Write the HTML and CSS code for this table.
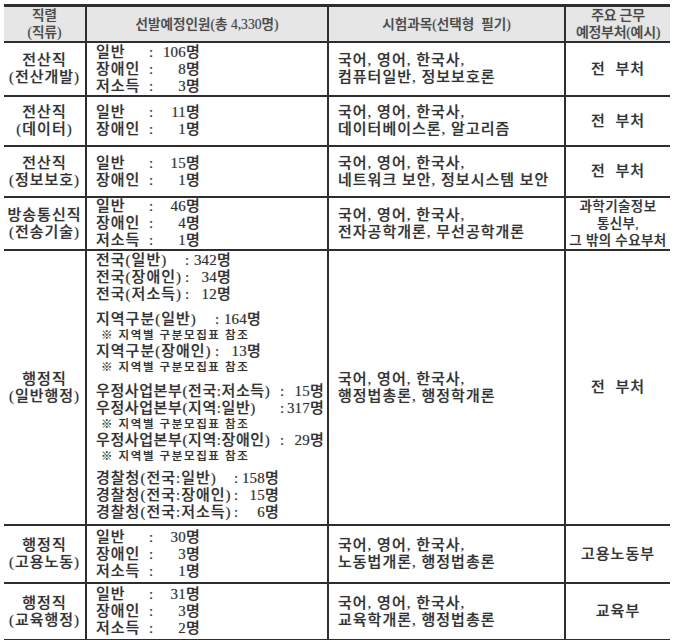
FILE: index.html
```html
<!DOCTYPE html>
<html lang="ko">
<head>
<meta charset="utf-8">
<title>선발예정인원</title>
<link rel="stylesheet" href="styles.css">
</head>
<body>
<table class="recruit">
  <colgroup>
    <col class="c1"><col class="c2"><col class="c3"><col class="c4">
  </colgroup>
  <thead>
    <tr class="head">
      <th>직렬<br>(직류)</th>
      <th>선발예정인원(총 4,330명)</th>
      <th>시험과목(선택형&nbsp; 필기)</th>
      <th class="dept-head">주요 근무<br>예정부처(예시)</th>
    </tr>
  </thead>
  <tbody>
    <tr class="r1">
      <td class="job">전산직<br>(전산개발)</td>
      <td class="quota">
        <div class="grp g-a">
          <span>일반</span><span>:</span><span class="n">106명</span>
          <span>장애인</span><span>:</span><span class="n">8명</span>
          <span>저소득</span><span>:</span><span class="n">3명</span>
        </div>
      </td>
      <td class="subj">국어, 영어, 한국사,<br>컴퓨터일반, 정보보호론</td>
      <td class="dept">전 부처</td>
    </tr>
    <tr class="r2">
      <td class="job">전산직<br>(데이터)</td>
      <td class="quota">
        <div class="grp g-a">
          <span>일반</span><span>:</span><span class="n">11명</span>
          <span>장애인</span><span>:</span><span class="n">1명</span>
        </div>
      </td>
      <td class="subj">국어, 영어, 한국사,<br>데이터베이스론, 알고리즘</td>
      <td class="dept">전 부처</td>
    </tr>
    <tr class="r3">
      <td class="job">전산직<br>(정보보호)</td>
      <td class="quota">
        <div class="grp g-a">
          <span>일반</span><span>:</span><span class="n">15명</span>
          <span>장애인</span><span>:</span><span class="n">1명</span>
        </div>
      </td>
      <td class="subj">국어, 영어, 한국사,<br>네트워크 보안, 정보시스템 보안</td>
      <td class="dept">전 부처</td>
    </tr>
    <tr class="r4">
      <td class="job">방송통신직<br>(전송기술)</td>
      <td class="quota">
        <div class="grp g-a">
          <span>일반</span><span>:</span><span class="n">46명</span>
          <span>장애인</span><span>:</span><span class="n">4명</span>
          <span>저소득</span><span>:</span><span class="n">1명</span>
        </div>
      </td>
      <td class="subj">국어, 영어, 한국사,<br>전자공학개론, 무선공학개론</td>
      <td class="dept dept-sm">과학기술정보<br>통신부,<br>그 밖의 수요부처</td>
    </tr>
    <tr class="r5">
      <td class="job">행정직<br>(일반행정)</td>
      <td class="quota">
        <div class="grp g-b">
          <span>전국(일반)</span><span>:</span><span class="n">342명</span>
          <span>전국(장애인)</span><span>:</span><span class="n">34명</span>
          <span>전국(저소득)</span><span>:</span><span class="n">12명</span>
        </div>
        <div class="grp g-c">
          <span>지역구분(일반)</span><span>:</span><span class="n">164명</span>
          <span class="note">※ 지역별 구분모집표 참조</span>
          <span>지역구분(장애인)</span><span>:</span><span class="n">13명</span>
          <span class="note">※ 지역별 구분모집표 참조</span>
        </div>
        <div class="grp g-d">
          <span>우정사업본부(전국:저소득)</span><span>:</span><span class="n">15명</span>
          <span>우정사업본부(지역:일반)</span><span>:</span><span class="n">317명</span>
          <span class="note">※ 지역별 구분모집표 참조</span>
          <span>우정사업본부(지역:장애인)</span><span>:</span><span class="n">29명</span>
          <span class="note">※ 지역별 구분모집표 참조</span>
        </div>
        <div class="grp g-e">
          <span>경찰청(전국:일반)</span><span>:</span><span class="n">158명</span>
          <span>경찰청(전국:장애인)</span><span>:</span><span class="n">15명</span>
          <span>경찰청(전국:저소득)</span><span>:</span><span class="n">6명</span>
        </div>
      </td>
      <td class="subj">국어, 영어, 한국사,<br>행정법총론, 행정학개론</td>
      <td class="dept">전 부처</td>
    </tr>
    <tr class="r6">
      <td class="job">행정직<br>(고용노동)</td>
      <td class="quota">
        <div class="grp g-a">
          <span>일반</span><span>:</span><span class="n">30명</span>
          <span>장애인</span><span>:</span><span class="n">3명</span>
          <span>저소득</span><span>:</span><span class="n">1명</span>
        </div>
      </td>
      <td class="subj">국어, 영어, 한국사,<br>노동법개론, 행정법총론</td>
      <td class="dept">고용노동부</td>
    </tr>
    <tr class="r7">
      <td class="job">행정직<br>(교육행정)</td>
      <td class="quota">
        <div class="grp g-a">
          <span>일반</span><span>:</span><span class="n">31명</span>
          <span>장애인</span><span>:</span><span class="n">3명</span>
          <span>저소득</span><span>:</span><span class="n">2명</span>
        </div>
      </td>
      <td class="subj">국어, 영어, 한국사,<br>교육학개론, 행정법총론</td>
      <td class="dept">교육부</td>
    </tr>
    <tr class="r8">
      <td></td><td></td><td></td><td></td>
    </tr>
  </tbody>
</table>
</body>
</html>
```

FILE: styles.css
```css
html, body {
  margin: 0;
  padding: 0;
  background: #ffffff;
}

body {
  font-family: "Liberation Serif", "Noto Sans CJK KR", serif;
  color: #333333;
  font-size: 15px;
  line-height: 17px;
  font-weight: 500;
  letter-spacing: 1px;
  text-shadow: 0 0 1px rgba(0, 0, 0, 0.35);
}

.recruit {
  margin: 4px 0 0 4px;
  width: 666px;
  border-collapse: collapse;
  table-layout: fixed;
}

.c1 { width: 82px; }
.c2 { width: 242px; }
.c3 { width: 237px; }
.c4 { width: 105px; }

.recruit th,
.recruit td {
  border: 2px solid #2e2e2e;
  padding: 0;
  vertical-align: middle;
}

.recruit tr > :first-child { border-left: none; }
.recruit tr > :last-child { border-right: none; }

.recruit thead th {
  border-top: 3px solid #2e2e2e;
  background: #e6e6e6;
  color: #4a4a4a;
  font-weight: 500;
  height: 33px;
  text-align: center;
  font-size: 13.6px;
  letter-spacing: 0;
}

.recruit .dept-head {
  font-size: 14px;
  letter-spacing: -0.3px;
}

.r1 td { height: 52px; }
.r2 td { height: 48px; }
.r3 td { height: 49px; }
.r4 td { height: 50px; }
.r6 td { height: 56px; }
.r7 td { height: 55px; }
.r8 td { height: 40px; }

.job {
  text-align: center;
  white-space: nowrap;
}

.quota {
  padding: 0 0 0 9px !important;
}

.r5 .quota {
  padding-top: 1px !important;
  padding-bottom: 3px !important;
}

.subj {
  padding: 0 0 0 9px !important;
  white-space: nowrap;
}

.dept {
  text-align: center;
  word-spacing: 5px;
  white-space: nowrap;
}

.dept-sm {
  font-size: 13.5px;
  word-spacing: 0;
  letter-spacing: 0.4px;
}

.grp {
  display: grid;
  align-items: center;
  white-space: nowrap;
}

.grp + .grp {
  margin-top: 8px;
}

.grp + .g-e {
  margin-top: 6px;
}

.grp .n {
  text-align: right;
  letter-spacing: 0.2px;
}

.grp .note {
  grid-column: 1 / -1;
  font-size: 11.5px;
  line-height: 15px;
  letter-spacing: 1.6px;
  padding-left: 5px;
}

.g-a { grid-template-columns: 53px 8px 43px; }
.g-b { grid-template-columns: 89px 7px 39px; }
.g-c { grid-template-columns: 119px 7px 39px; }
.g-d { grid-template-columns: 184px 5px 39px; letter-spacing: 0.6px; }
.g-e { grid-template-columns: 138px 6px 39px; }
```
